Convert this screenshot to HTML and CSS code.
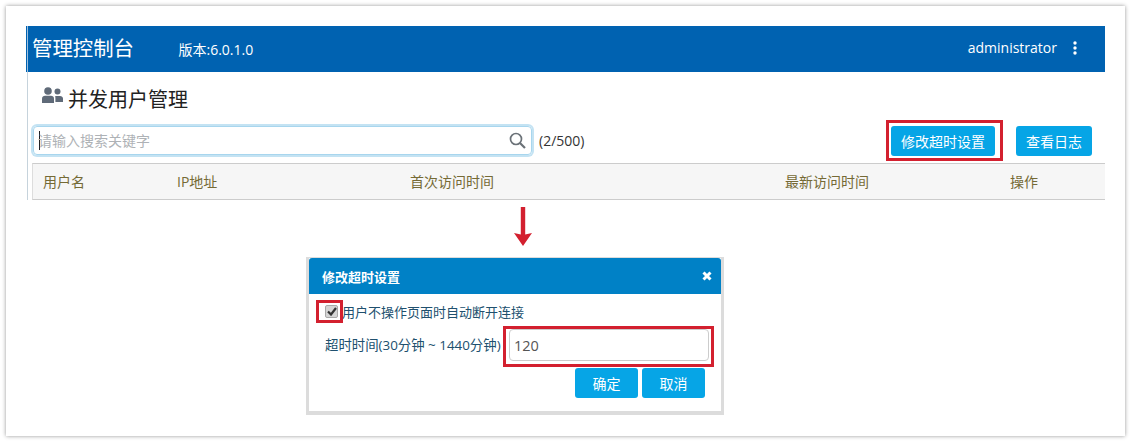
FILE: index.html
```html
<!DOCTYPE html>
<html lang="zh-CN">
<head>
<meta charset="utf-8">
<title>并发用户管理</title>
<link rel="stylesheet" href="styles.css">
</head>
<body>
<main class="sheet">
  <section class="console">
    <header class="banner">
      <span class="brand">管理控制台</span>
      <span class="version">版本:6.0.1.0</span>
      <span class="user">administrator</span>
      <svg class="dots" width="4" height="14" viewBox="0 0 4 14"><circle cx="2" cy="2" r="1.7"/><circle cx="2" cy="7" r="1.7"/><circle cx="2" cy="12" r="1.7"/></svg>
    </header>
    <div class="content">
      <h1 class="page-title">
        <svg class="users" width="21" height="18" viewBox="0 0 21 18"><circle cx="6" cy="4" r="3.8"/><circle cx="15.5" cy="4.5" r="3"/><path d="M0 16v-4.5C0 9.6 1.5 8.7 3 8.7h6c1.6 0 3 1 3 2.8V16z"/><path d="M13.2 9h4.8c1.7 0 3 1 3 2.6V15h-7.6v-3.600c0-1-.1-1.700-.2-2.400z"/></svg>
        并发用户管理
      </h1>
      <div class="toolbar">
        <div class="search">
          <span class="caret"></span>
          <span class="placeholder">请输入搜索关键字</span>
          <svg class="search-icon" width="17" height="17" viewBox="0 0 17 17"><circle cx="7" cy="7" r="5.500"/><path d="M11 11l5 5" stroke-width="2.200"/></svg>
        </div>
        <span class="count">(2/500)</span>
        <button class="btn btn-timeout">修改超时设置<span class="mark mark-timeout"></span></button>
        <button class="btn btn-log">查看日志</button>
      </div>
      <div class="table-head">
        <span>用户名</span>
        <span>IP地址</span>
        <span>首次访问时间</span>
        <span>最新访问时间</span>
        <span>操作</span>
      </div>
    </div>
  </section>

  <svg class="arrow" width="18" height="39" viewBox="0 0 18 39"><path d="M6.800 0h4.400v27.500L18 26 9 39 0 26l6.800 1.500z"/></svg>

  <section class="dialog">
    <header class="dialog-head">
      <span>修改超时设置</span>
      <svg class="close" width="10" height="10" viewBox="0 0 10 10"><path d="M1.500 1.500l7 7M8.500 1.500l-7 7"/></svg>
    </header>
    <div class="dialog-body">
      <label class="check-row">
        <span class="checkbox">
          <svg width="10" height="9" viewBox="0 0 10 9"><path d="M1 4.500l3 3 5-6.500"/></svg>
          <span class="mark mark-check"></span>
        </span>
        用户不操作页面时自动断开连接
      </label>
      <div class="field-row">
        <span class="field-label">超时时间(30分钟 ~ 1440分钟)</span>
        <div class="input">120<span class="mark mark-input"></span></div>
      </div>
      <div class="actions">
        <button class="btn btn-small">确定</button>
        <button class="btn btn-small">取消</button>
      </div>
    </div>
  </section>
</main>
</body>
</html>
```
FILE: styles.css
```css
* { box-sizing: border-box; }
html, body { margin: 0; height: 100%; background: #fff; overflow: hidden; }
body {
  padding: 6px;
  font-family: "Open Sans", "Noto Sans CJK SC", sans-serif;
  font-size: 14px;
}
.sheet {
  width: 1119px;
  height: 430px;
  padding: 20px 20px 0;
  background: #fff;
  box-shadow: 0 0 4px rgba(0, 0, 0, .42);
}
.console { width: 1079px; }
.banner {
  height: 46px;
  display: flex;
  align-items: center;
  padding: 0 28px 0 5px;
  background: #0062b1;
  color: #fff;
  border-left: 1px solid #0062b1;
  box-shadow: inset 1px 0 0 #9fc0de;
}
.brand { font-size: 20.400px; line-height: 46px; position: relative; top: -1px; }
.version { margin-left: 44.500px; font-size: 14px; line-height: 46px; padding-top: 1px; }
.user { margin-left: auto; font-size: 14px; position: relative; top: -2px; }
.dots { margin-left: 16px; fill: #fff; position: relative; top: -1px; }
.content {
  height: 128px;
  margin-left: 1px;
  padding-left: 4px;
  border-left: 1px solid #c6d3dc;
}
.page-title {
  display: flex;
  align-items: center;
  height: 52px;
  margin: 0 0 2px;
  padding-left: 10px;
  font-size: 20px;
  font-weight: 400;
  color: #222;
}
.users { fill: #5f6a78; margin-right: 5px; position: relative; top: -2px; }
.toolbar { display: flex; align-items: flex-start; height: 37px; padding-left: 1px; }
.search {
  position: relative;
  display: flex;
  align-items: center;
  width: 499px;
  height: 29px;
  padding-left: 5px;
  border: 1px solid #a8d6ee;
  border-radius: 4px;
  box-shadow: 0 0 0 2px #c4e3f3;
}
.caret { width: 1px; height: 19px; background: #222; }
.placeholder { color: #aeb2b6; font-size: 14px; margin-left: -2px; position: relative; top: -1px; }
.search-icon {
  margin-left: auto;
  margin-right: 5px;
  fill: none;
  stroke: #6b7278;
  stroke-width: 1.700;
}
.count { margin-left: 7px; line-height: 29px; color: #333; }
.btn {
  position: relative;
  height: 30px;
  padding: 0;
  border: 0;
  border-radius: 3px;
  background: #06a5e6;
  color: #fff;
  font: 14px "Open Sans", "Noto Sans CJK SC", sans-serif;
}
.btn-timeout { width: 104px; margin-left: auto; }
.btn-log { width: 76px; margin-left: 21px; margin-right: 13px; }
.table-head {
  display: grid;
  grid-template-columns: 134px 233px 375px 225px 1fr;
  align-items: center;
  height: 37px;
  padding: 0 0 2px 10px;
  background: #f6f6f6;
  border-top: 1px solid #ccc;
  border-bottom: 1px solid #ccc;
  border-left: 1px solid #ddd;
  color: #756a35;
}
.mark {
  position: absolute;
  border: 3px solid #d3202f;
  pointer-events: none;
}
.mark-timeout { left: -5px; top: -6px; width: 117px; height: 41px; }
.arrow { display: block; margin: 7px 0 11px 488px; fill: #d3202f; }
.dialog {
  width: 418px;
  height: 158px;
  margin-left: 280px;
  border: 3px solid #dcdcdc;
  border-top-width: 1px;
  border-bottom-width: 4px;
  background: #fff;
}
.dialog-head {
  display: flex;
  align-items: center;
  justify-content: space-between;
  height: 36px;
  padding: 0 9px 0 13px;
  background: #0081c6;
  color: #fff;
  font-size: 13px;
  font-weight: 700;
  border-radius: 3px 3px 0 0;
}
.close { fill: none; stroke: #fff; stroke-width: 3; }
.dialog-body { padding: 0 16px; color: #20506e; font-size: 13px; }
.check-row { display: flex; align-items: center; height: 35px; font-size: 13px; }
.checkbox {
  position: relative;
  display: flex;
  align-items: center;
  justify-content: center;
  width: 13px;
  height: 13px;
  margin-right: 4px;
  background: #d5d5d5;
  border: 1px solid #a9a9a9;
  border-radius: 2px;
}
.checkbox svg { fill: none; stroke: #333; stroke-width: 2.200; }
.mark-check { left: -10px; top: -6px; width: 27px; height: 23px; }
.field-row { display: flex; align-items: center; justify-content: space-between; height: 32px; }
.field-label { font-size: 13.400px; position: relative; top: -1px; }
.input {
  position: relative;
  display: flex;
  align-items: center;
  width: 200px;
  height: 32px;
  margin-right: -4px;
  padding-left: 4px;
  border: 1px solid #ccc;
  border-radius: 4px;
  color: #555;
  font-size: 14.500px;
}
.mark-input { left: -7px; top: -4px; width: 211px; height: 41px; }
.actions { display: flex; justify-content: flex-end; gap: 4px; margin-top: 7px; }
.btn-small { width: 63px; }
```
